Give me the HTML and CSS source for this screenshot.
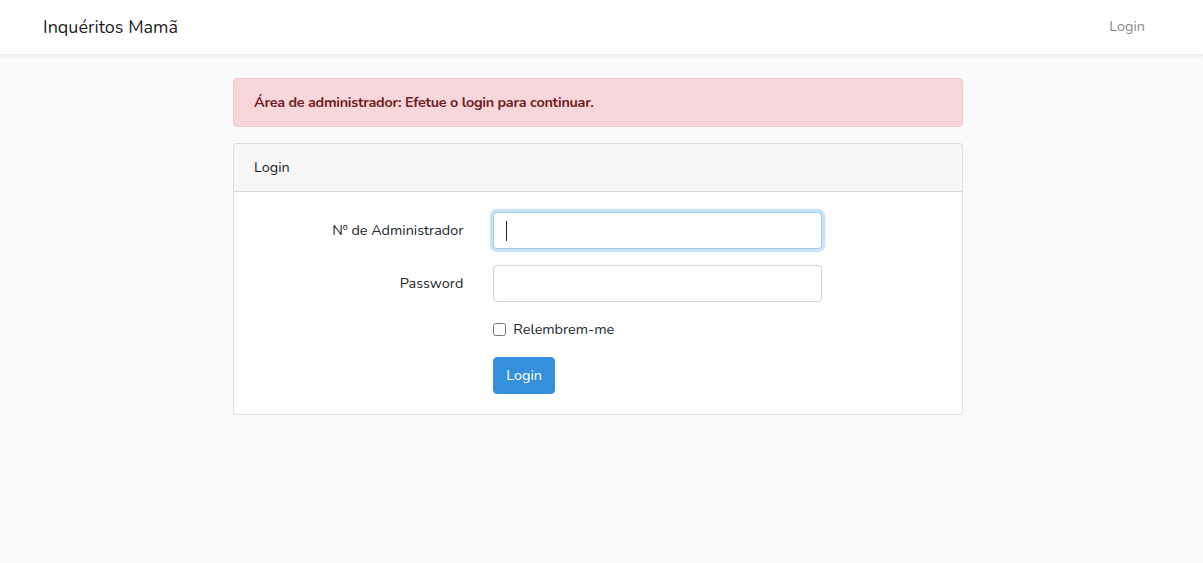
FILE: index.html
```html
<!DOCTYPE html>
<html lang="pt">
<head>
<meta charset="utf-8">
<title>Inquéritos Mamã</title>
<link rel="stylesheet" href="styles.css">
</head>
<body>
<nav class="navbar">
  <div class="nav-inner">
    <a class="brand" href="#">Inquéritos Mamã</a>
    <a class="nav-link" href="#">Login</a>
  </div>
</nav>
<main class="main">
  <div class="container">
    <div class="alert"><strong>Área de administrador: Efetue o login para continuar.</strong></div>
    <div class="card">
      <div class="card-header">Login</div>
      <div class="card-body">
        <form class="form">
          <label class="form-label" for="num">Nº de Administrador</label>
          <div class="field">
            <input class="form-control is-focused" id="num" type="text">
            <span class="caret"></span>
          </div>
          <label class="form-label" for="pw">Password</label>
          <input class="form-control" id="pw" type="password">
          <div class="spacer"></div>
          <div class="form-check">
            <input class="check" type="checkbox" id="remember">
            <label for="remember">Relembrem-me</label>
          </div>
          <div class="spacer"></div>
          <div><button class="btn" type="button">Login</button></div>
        </form>
      </div>
    </div>
  </div>
</main>
</body>
</html>
```

FILE: styles.css
```css
* { box-sizing: border-box; }
html, body { margin: 0; }
body {
  background: #f8fafc;
  font-family: "Nunito", "Lato", "Open Sans", sans-serif;
  font-size: 14.4px;
  line-height: 1.6;
  color: #212529;
}
a { text-decoration: none; }

.navbar {
  background: #fff;
  height: 54px;
  box-shadow: 0 2px 4px rgba(0,0,0,0.075);
  padding-right: 7px;
}
.nav-inner {
  max-width: 1140px;
  height: 100%;
  margin: 0 auto;
  padding: 0 15px;
  display: flex;
  align-items: center;
  justify-content: space-between;
}
.brand {
  font-size: 18px;
  color: rgba(0,0,0,0.9);
}
.nav-link {
  padding: 0 8px;
  color: rgba(0,0,0,0.5);
}

.main {
  padding: 24px 7px 24px 0;
}
.container {
  width: 730px;
  margin: 0 auto;
}
.alert {
  background: #f8d7da;
  border: 1px solid #f5c6cb;
  color: #721c24;
  border-radius: 4px;
  padding: 12px 20px;
  margin-bottom: 16px;
}
.alert strong {
  font-weight: 700;
  letter-spacing: -0.27px;
}

.card {
  background: #fff;
  border: 1px solid rgba(0,0,0,0.125);
  border-radius: 4px;
}
.card-header {
  background: rgba(0,0,0,0.03);
  border-bottom: 1px solid rgba(0,0,0,0.125);
  padding: 12px 20px;
}
.card-body {
  padding: 20px;
}
.form {
  display: grid;
  grid-template-columns: 209.33px 329px;
  column-gap: 30px;
  row-gap: 16px;
  align-items: center;
}
.form-label {
  text-align: right;
}
.field {
  position: relative;
}
.caret {
  position: absolute;
  left: 13px;
  top: 9px;
  width: 1px;
  height: 20px;
  background: #212529;
}
.form-control {
  display: block;
  width: 100%;
  height: 37px;
  padding: 6px 12px;
  font: inherit;
  color: #495057;
  background: #fff;
  border: 1px solid #ced4da;
  border-radius: 4px;
  outline: none;
}
.form-control.is-focused,
.form-control:focus {
  border-color: #a1cbef;
  box-shadow: 0 0 0 3.2px rgba(52,144,220,0.25);
}
.form-check {
  display: flex;
  align-items: center;
  gap: 7px;
  height: 23px;
}
.check {
  width: 13px;
  height: 13px;
  margin: 0;
}
.btn {
  font: inherit;
  color: #fff;
  background: #3490dc;
  border: 1px solid #3490dc;
  border-radius: 4px;
  padding: 6px 12px;
  line-height: 1.6;
  height: 37px;
}
```
